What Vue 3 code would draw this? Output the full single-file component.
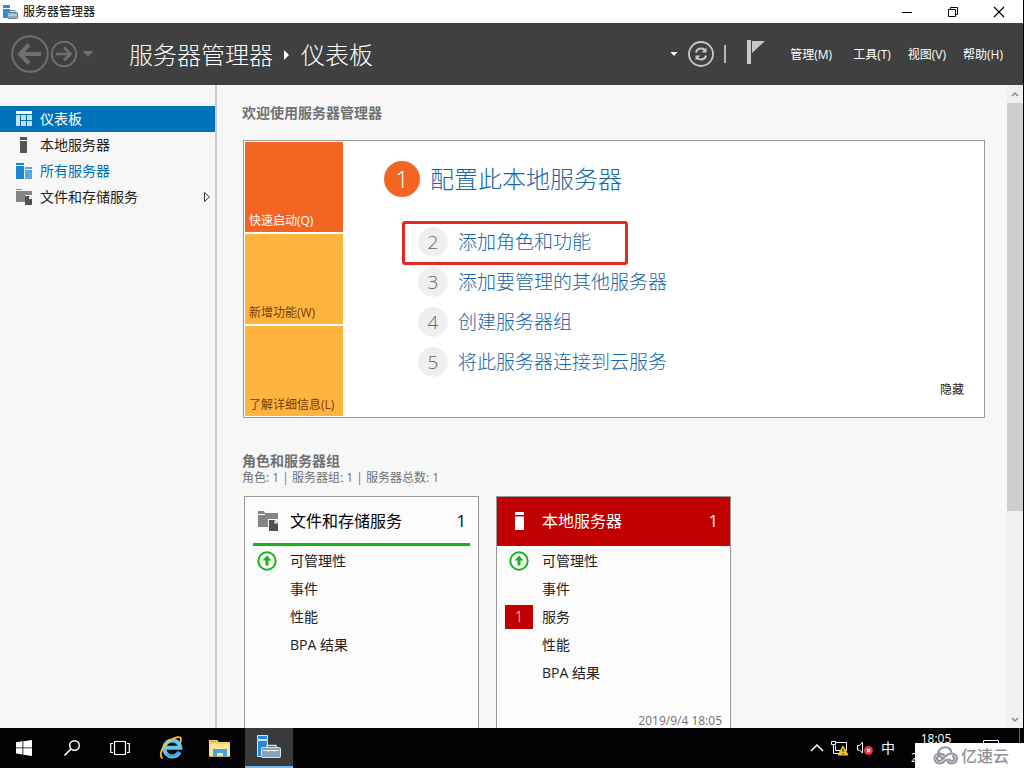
<script setup>
const menus = ['管理(M)', '工具(T)', '视图(V)', '帮助(H)']
const nav = [
  { icon: 'dashboard', label: '仪表板', active: true },
  { icon: 'server', label: '本地服务器' },
  { icon: 'servers', label: '所有服务器', link: true },
  { icon: 'storage', label: '文件和存储服务', more: true },
]
const tiles = [
  { label: '快速启动(Q)', tone: 'strong' },
  { label: '新增功能(W)', tone: 'soft' },
  { label: '了解详细信息(L)', tone: 'soft' },
]
const steps = [
  { n: 2, label: '添加角色和功能', marked: true },
  { n: 3, label: '添加要管理的其他服务器' },
  { n: 4, label: '创建服务器组' },
  { n: 5, label: '将此服务器连接到云服务' },
]
const cards = [
  {
    title: '文件和存储服务', icon: 'storage', count: 1, alert: false, time: '',
    rows: [{ label: '可管理性', ok: true }, { label: '事件' }, { label: '性能' }, { label: 'BPA 结果' }],
  },
  {
    title: '本地服务器', icon: 'server', count: 1, alert: true, time: '2019/9/4 18:05',
    rows: [{ label: '可管理性', ok: true }, { label: '事件' }, { label: '服务', badge: 1 }, { label: '性能' }, { label: 'BPA 结果' }],
  },
]
</script>

<template>
  <div class="desktop">
    <div class="window">
      <div class="titlebar">
        <svg class="app-icon" width="15" height="16" viewBox="0 0 15 16">
          <path d="M0 1h7v3H0zM0 5h7v4H4v5H0z" fill="#2b8fd3" />
          <path d="M7 8V6.500h5V8" fill="none" stroke="#6d8ba3" />
          <rect x="4.500" y="8.500" width="10" height="6" rx="1" fill="#8fa9bd" stroke="#5f7f99" />
          <path d="M5 11h9" stroke="#dfe9f0" />
        </svg>
        <span class="app-title">服务器管理器</span>
        <div class="win-buttons">
          <button aria-label="最小化"><svg width="12" height="12" viewBox="0 0 12 12"><path d="M1 6.500h10" stroke="#000" /></svg></button>
          <button aria-label="还原"><svg width="12" height="12" viewBox="0 0 12 12" fill="none" stroke="#000"><path d="M1.500 3.500h7v7h-7zM3.500 3.500v-2h7v7h-2" /></svg></button>
          <button aria-label="关闭"><svg width="12" height="12" viewBox="0 0 12 12"><path d="M1 1l10 10M11 1L1 11" stroke="#000" stroke-width="1.200" /></svg></button>
        </div>
      </div>

      <header class="header">
        <button class="plain" aria-label="后退">
          <svg width="38" height="38" viewBox="0 0 38 38" fill="none" stroke="#707070">
            <circle cx="19" cy="19" r="17.800" stroke-width="2" />
            <path d="M9 19h21" stroke-width="4" /><path d="M18 9.500L9 19l9 9.500" stroke-width="4" />
          </svg>
        </button>
        <button class="plain forward" aria-label="前进">
          <svg width="28" height="28" viewBox="0 0 28 28" fill="none" stroke="#707070">
            <circle cx="14" cy="14" r="12.200" stroke-width="2" />
            <path d="M6 14h14" stroke-width="2.600" /><path d="M14 7.500l6.500 6.500-6.500 6.500" stroke-width="2.600" />
          </svg>
        </button>
        <button class="plain history" aria-label="历史记录"><svg width="12" height="6" viewBox="0 0 12 6"><path d="M0.500 0h11L6 6z" fill="#707070" /></svg></button>
        <h1 class="crumbs">
          <span>服务器管理器</span>
          <svg width="6" height="10" viewBox="0 0 6 10"><path d="M0 0l5 5-5 5z" fill="#fff" /></svg>
          <span>仪表板</span>
        </h1>
        <div class="tools">
          <button class="plain" aria-label="选项"><svg width="8" height="4" viewBox="0 0 8 4"><path d="M0.500 0h7L4 4z" fill="#fff" /></svg></button>
          <button class="plain refresh" aria-label="刷新">
            <svg width="28" height="28" viewBox="0 0 28 28" fill="none" stroke="#c8c8c8">
              <circle cx="14" cy="14" r="12" stroke-width="1.800" />
              <path d="M9 12.500c.8-3 3.200-4 5.200-4 1.800 0 3.200.8 4 2M19 15.500c-.8 3-3.200 4-5.200 4-1.800 0-3.200-.8-4-2" stroke-width="2.200" />
              <path d="M19.500 7.500v5h-5zM8.500 20.500v-5h5z" fill="#c8c8c8" stroke="none" />
            </svg>
          </button>
          <span class="divider"></span>
          <button class="plain flag" aria-label="通知">
            <svg width="18" height="24" viewBox="0 0 18 24" fill="#c8c8c8"><path d="M0 0h4v24H0zM5 1h13L5 13z" /></svg>
          </button>
          <nav class="menus"><button v-for="m in menus" :key="m">{{ m }}</button></nav>
        </div>
      </header>

      <div class="body">
        <nav class="sidebar">
          <a v-for="item in nav" :key="item.label" href="#" class="nav-item" :class="{ active: item.active, link: item.link }">
            <svg v-if="item.icon === 'dashboard'" width="16" height="16" viewBox="0 0 16 16">
              <path d="M0 0h16v3H0z" fill="#fff" /><path d="M0 4h4v11H0zM5 4h5v5H5zM11 4h5v5h-5zM5 10h5v5H5zM11 10h5v5h-5z" fill="#c4dff2" />
            </svg>
            <svg v-else-if="item.icon === 'server'" width="16" height="16" viewBox="0 0 16 16"><path d="M4 0h7v3H4zM4 4h7v12H4z" fill="#555" /></svg>
            <svg v-else-if="item.icon === 'servers'" width="16" height="16" viewBox="0 0 16 16">
              <path d="M0 0h8v2H0zM0 3h8v13H0z" fill="#1b86d1" /><path d="M9 4h7v2H9zM9 7h7v9H9z" fill="#5aa7df" />
            </svg>
            <svg v-else width="16" height="16" viewBox="0 0 16 16">
              <path d="M0 0h6v1H0zM0 2h7l1 0h8v4H9v7H0z" fill="#858585" /><path d="M9 7h4l3 3v6H9z" fill="#505050" /><path d="M13 7v3h3z" fill="#f7f7f7" />
            </svg>
            <span>{{ item.label }}</span>
            <svg v-if="item.more" class="more" width="8" height="12" viewBox="0 0 8 12"><path d="M1.500 1.500L6.500 6l-5 4.500z" fill="none" stroke="#333" /></svg>
          </a>
        </nav>

        <main class="content">
          <h2 class="heading">欢迎使用服务器管理器</h2>
          <section class="welcome">
            <div class="tiles">
              <button v-for="t in tiles" :key="t.label" class="tile" :class="t.tone">{{ t.label }}</button>
            </div>
            <div class="steps">
              <a href="#" class="step primary"><span class="num">1</span><span>配置此本地服务器</span></a>
              <a v-for="s in steps" :key="s.n" href="#" class="step">
                <span v-if="s.marked" class="marker"></span>
                <span class="num">{{ s.n }}</span><span>{{ s.label }}</span>
              </a>
            </div>
            <button class="hide">隐藏</button>
          </section>

          <h2 class="heading groups">角色和服务器组</h2>
          <p class="summary">角色: 1 | 服务器组: 1 | 服务器总数: 1</p>
          <div class="cards">
            <article v-for="c in cards" :key="c.title" class="card" :class="{ alert: c.alert }">
              <header class="card-head">
                <svg v-if="c.icon === 'storage'" width="22" height="20" viewBox="0 0 22 20">
                  <path d="M1 0h6l1 2h13v6H11v8H1V4h7V3H1z" fill="#858585" /><path d="M12 9h6l3 3v8h-9z" fill="#505050" /><path d="M17.500 9v3.500H21z" fill="#fcfcfc" />
                </svg>
                <svg v-else width="22" height="20" viewBox="0 0 22 20"><path d="M6 1h9v3H6zM6 5.500h9V19H6z" fill="#fff" /></svg>
                <h3>{{ c.title }}</h3>
                <span>{{ c.count }}</span>
              </header>
              <ul>
                <li v-for="r in c.rows" :key="r.label">
                  <span class="state">
                    <svg v-if="r.ok" width="20" height="20" viewBox="0 0 20 20">
                      <circle cx="10" cy="10" r="8.700" fill="#fff" stroke="#16b516" stroke-width="2" />
                      <path d="M10 4.500l4.500 5h-3v5h-3v-5h-3z" fill="#16b516" />
                    </svg>
                    <span v-if="r.badge" class="badge">{{ r.badge }}</span>
                  </span>
                  <a href="#">{{ r.label }}</a>
                </li>
              </ul>
              <time v-if="c.time">{{ c.time }}</time>
            </article>
          </div>
        </main>

        <div class="scrollbar">
          <button aria-label="向上滚动"><svg width="8" height="6" viewBox="0 0 8 6"><path d="M1 5l3-3 3 3" fill="none" stroke="#8a8a8a" stroke-width="1.500" /></svg></button>
          <div class="track"><div class="thumb"></div></div>
          <button aria-label="向下滚动"><svg width="8" height="6" viewBox="0 0 8 6"><path d="M1 1l3 3 3-3" fill="none" stroke="#8a8a8a" stroke-width="1.500" /></svg></button>
        </div>
      </div>
    </div>

    <footer class="taskbar">
      <div class="apps">
        <button aria-label="开始"><svg width="16" height="16" viewBox="0 0 16 16" fill="#fff"><path d="M0 2.200l6.500-.9v6.200H0zM7.300 1.200L16 0v7.500H7.300zM0 8.300h6.500v6.200L0 13.600zM7.300 8.300H16V16l-8.700-1.200z" /></svg></button>
        <button aria-label="搜索"><svg width="18" height="18" viewBox="0 0 18 18" fill="none" stroke="#fff"><circle cx="11.500" cy="6.500" r="4.800" stroke-width="1.500" /><path d="M8 10L1.500 16.500" stroke-width="1.700" /></svg></button>
        <button aria-label="任务视图"><svg width="20" height="16" viewBox="0 0 20 16" fill="none" stroke="#fff" stroke-width="1.200"><path d="M4.500 1.500h11v13h-11zM3 3.500H.700v9H3M17 3.500h2.300v9H17" /></svg></button>
      </div>
      <div class="pinned">
        <button aria-label="Internet Explorer">
          <svg width="24" height="24" viewBox="0 0 24 24" fill="none">
            <path d="M20.500 16a8 8 0 1 1 .8-4.200H7" stroke="#5fc7f3" stroke-width="4" />
            <path d="M20 16a7.800 7.800 0 0 1-12.500 2" stroke="#2e9fdc" stroke-width="1.500" />
            <path d="M3.500 22.500C-1 19 4 9 11 4.500 17 .500 22 0 22 3.500c0 1.200-.5 2.500-1.200 3.800" stroke="#f5c52c" stroke-width="1.800" />
          </svg>
        </button>
        <button aria-label="文件资源管理器">
          <svg width="22" height="18" viewBox="0 0 22 18">
            <path d="M0 1h8l2 2h11v14.500H0z" fill="#f6cf69" /><path d="M0 5h21v12.500H0z" fill="#fde495" /><path d="M2 2.500h5" stroke="#d99c25" />
            <path d="M4 17.500V10h14v7.500h-4v-3.500H8v3.500z" fill="#3ea9dc" />
          </svg>
        </button>
        <button class="running" aria-label="服务器管理器">
          <svg width="26" height="26" viewBox="0 0 26 26">
            <path d="M1.500 1.500h10v4h-10zM1.500 6.500h10v7h-5v9h-5z" fill="#1d8be0" stroke="#cfe9fa" />
            <path d="M11 13.500v-2h9v2" fill="none" stroke="#d7e2e9" stroke-width="1.300" />
            <rect x="5.500" y="13.500" width="19" height="10" rx="1" fill="#8ba3b3" stroke="#d7e2e9" />
            <path d="M7 16.500h16M12 16.500v1.500M18 16.500v1.500" fill="none" stroke="#e4edf2" />
          </svg>
        </button>
      </div>
      <div class="tray">
        <button aria-label="显示隐藏的图标"><svg width="14" height="8" viewBox="0 0 14 8"><path d="M1 7l6-6 6 6" fill="none" stroke="#fff" stroke-width="1.500" /></svg></button>
        <button aria-label="网络">
          <svg width="18" height="16" viewBox="0 0 18 16" fill="none" stroke="#fff"><path d="M5 2.500h10.500v8H4.500v-5M.500 1.500h4v3h-4zM2.500 5v8.500H9" /><path d="M12 6l5 9H7z" fill="#f8c32e" stroke="#f8c32e" /><path d="M12 8.500v3.500M12 13v1.500" stroke="#201800" /></svg>
        </button>
        <button aria-label="音量">
          <svg width="18" height="16" viewBox="0 0 18 16" fill="none"><path d="M1.500 5.500h2l3-3.500v11L3.500 10h-2z" stroke="#fff" /><circle cx="12.500" cy="10.500" r="4.500" fill="#dc3545" /><path d="M10.800 8.800l3.400 3.400M14.200 8.800l-3.400 3.400" stroke="#fff" stroke-width="1.200" /></svg>
        </button>
        <button class="ime">中</button>
        <div class="clock"><span>18:05</span><span>2019/9/4</span></div>
        <button class="action" aria-label="操作中心"><svg width="16" height="16" viewBox="0 0 16 16" fill="none" stroke="#fff"><path d="M.500.500h15v11h-5l-2 3v-3h-8z" /></svg></button>
        <span class="show-desktop"></span>
      </div>
      <div class="watermark">
        <svg width="26" height="19" viewBox="0 0 26 19" fill="none" stroke="#8e929b" stroke-width="2">
          <path d="M5.500 9C4.500 4.500 8 1.200 12 1.200c3.500 0 6 2.300 6.500 5.200" />
          <path d="M9 12.500a2.500 2.500 0 1 0-2.500 2.500c3.500 0 5-7.500 12.500-7.500a5 5 0 0 1 0 10c-3.500 0-5-2.500-5-5M11.500 9.500C10.300 8.200 8.600 7.500 6.500 7.500a5 5 0 0 0 0 10c3.500 0 5-2 6-4" />
          <path d="M16.500 12.500a2.500 2.500 0 1 0 2.500-2.500" />
        </svg>
        <span>亿速云</span>
      </div>
    </footer>
  </div>
</template>

<style>
body { margin: 0; background: #000; }
</style>

<style scoped>
.desktop { height: 100vh; display: flex; flex-direction: column; overflow: hidden; background: #000; font-family: "Open Sans", "Noto Sans CJK SC", sans-serif; font-size: 12px; line-height: 16px; color: #222; }
* { box-sizing: border-box; }
svg { display: block; flex: none; }
button { font: inherit; color: inherit; background: none; border: 0; padding: 0; display: flex; align-items: center; justify-content: center; white-space: nowrap; }
a { color: inherit; text-decoration: none; }
h1, h2, h3, p, ul { margin: 0; padding: 0; font-weight: 400; }

.window { flex: 1; min-height: 0; margin-right: 1px; display: flex; flex-direction: column; background: #f7f7f7; }
.titlebar { height: 23px; flex: none; display: flex; align-items: center; background: #fff; padding: 0 1px 0 3px; color: #000; }
.app-title { margin-left: 5px; }
.win-buttons { margin-left: auto; display: flex; height: 20px; }
.win-buttons button { width: 46px; }

.header { height: 62px; flex: none; display: flex; align-items: center; padding: 0 20px 0 11px; background: #404040; color: #fff; }
.forward { margin-left: 1px; }
.history { margin-left: 4px; }
.crumbs { display: flex; align-items: center; margin-left: 35px; padding-top: 2px; gap: 11px; font-size: 24px; line-height: 32px; font-weight: 300; white-space: nowrap; }
.tools { margin-left: auto; display: flex; align-items: center; }
.refresh { margin-left: 9px; }
.divider { width: 2px; height: 18px; margin-left: 9px; background: #b8b8b8; }
.flag { margin: 0 25px 4px 21px; }
.menus { display: flex; gap: 17px; padding-top: 2px; }
.menus button:first-child { margin-right: 4px; }

.body { flex: 1; min-height: 0; display: flex; }
.sidebar { width: 217px; flex: none; padding-top: 21px; border-right: 2px solid #cbcbcb; }
.nav-item { display: flex; align-items: center; height: 26px; padding: 0 4px 0 16px; gap: 8px; font-size: 14px; }
.nav-item.active { background: #0072bc; color: #fff; }
.nav-item.link { color: #0072bc; }
.more { margin-left: auto; }

.content { flex: 1; min-width: 0; overflow: hidden; padding: 18px 22px 0 26px; }
.heading { font-size: 14px; line-height: 20px; font-weight: 700; color: #707070; margin-left: -1px; }
.welcome { position: relative; display: flex; margin-top: 17px; border: 1px solid #999; background: #fff; padding: 1px; }
.tiles { display: flex; flex-direction: column; gap: 2px; width: 98px; flex: none; }
.tile { height: 90px; align-items: flex-end; justify-content: flex-start; padding: 0 0 3px 4px; }
.tile.strong { background: #f46523; color: #fff; }
.tile.soft { background: #ffb440; color: #7a3c00; }
.steps { flex: 1; padding: 19px 0 0 41px; font-weight: 300; color: #1565a8; }
.step { position: relative; display: flex; align-items: center; height: 40px; padding-left: 34px; gap: 10px; font-size: 19px; line-height: 28px; width: fit-content; }
.num { width: 30px; height: 30px; border-radius: 50%; background: #efefef; color: #666; display: flex; align-items: center; justify-content: center; flex: none; }
.step.primary { height: 36px; padding: 0; margin-bottom: 25px; font-size: 24px; line-height: 36px; }
.primary .num { width: 36px; height: 36px; background: #f46523; color: #fff; }
.marker { position: absolute; left: 18px; top: -1px; width: 226px; height: 44px; border: 3px solid #e22a20; border-radius: 3px; }
.hide { align-self: flex-end; margin: 0 19px 18px 0; color: #222; }

.groups { margin-top: 33px; }
.summary { color: #707070; margin-left: -1px; line-height: 14px; }
.cards { display: flex; gap: 17px; margin: 11px 0 0 1px; }
.card { width: 235px; height: 240px; display: flex; flex-direction: column; border: 1px solid #999; background: #fcfcfc; color: #222; }
.card-head { height: 49px; margin: 0 8px; padding: 2px 4px 0; flex: none; display: flex; align-items: center; border-bottom: 3px solid #16b516; color: #000; font-size: 16px; line-height: 24px; }
.card-head h3 { flex: 1; margin-left: 11px; font-size: 16px; }
.card.alert .card-head { margin: 0; padding: 2px 12px 0; background: #c00000; border-color: #c00000; color: #fff; }
ul { list-style: none; padding-top: 1px; }
li { display: flex; align-items: center; height: 28px; padding-left: 8px; font-size: 14px; line-height: 20px; }
.state { width: 28px; margin-right: 9px; display: flex; justify-content: center; }
.badge { width: 28px; height: 24px; line-height: 24px; text-align: center; background: #c00000; color: #fff; font-weight: 300; }
time { margin: auto 8px 6px auto; color: #707070; }

.scrollbar { width: 16px; flex: none; display: flex; flex-direction: column; background: #f0f0f0; }
.scrollbar button { height: 17px; }
.track { flex: 1; }
.thumb { height: 67%; background: #cdcdcd; margin-top: 1px; }

.taskbar { position: relative; height: 40px; flex: none; display: flex; background: #020205; color: #fff; }
.apps, .pinned { display: flex; }
.apps button, .pinned button { width: 48px; height: 40px; }
.pinned { gap: 1px; margin-left: 3px; }
.pinned .running { background: #3a3a3c; border-bottom: 2px solid #76b9ed; }
.tray { margin-left: auto; display: flex; align-items: center; gap: 7px; padding-right: 4px; }
.ime { width: 14px; font-size: 14px; }
.clock { width: 64px; margin: 0 8px 0 2px; text-align: center; display: flex; flex-direction: column; line-height: 19px; }
.show-desktop { width: 1px; height: 40px; background: #666; margin-left: 13px; }
.watermark { position: absolute; right: 0; bottom: 0; width: 109px; height: 25px; padding-left: 18px; display: flex; align-items: center; gap: 2px; background: #fff; color: #8e929b; font-size: 16px; line-height: 24px; font-weight: 500; }
</style>
